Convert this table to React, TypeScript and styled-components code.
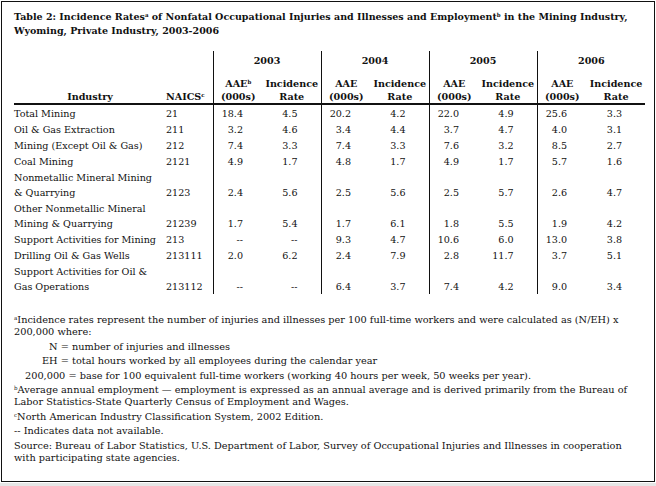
import React from "react";
import styled, { createGlobalStyle } from "styled-components";

const GlobalStyle = createGlobalStyle`
  html, body {
    margin: 0;
    padding: 0;
    background: #e6e6e6;
  }
  body {
    font-family: "DejaVu Serif", "Liberation Serif", serif;
    color: #111111;
  }
`;

const Page = styled.div`
  width: 656px;
  box-sizing: border-box;
  background: #ffffff;
  padding: 1px 1px 1px 1px;
`;

const Frame = styled.div`
  box-sizing: border-box;
  width: 654px;
  height: 481px;
  border: 1px solid #111111;
  padding: 8px 8px 0 12px;
  font-size: 9.6px;
`;

const Title = styled.h1`
  margin: 0;
  font-size: 9.5px;
  font-weight: bold;
  line-height: 14px;
  color: #111111;
`;

const Sup = styled.sup`
  font-size: 5.5px;
  vertical-align: 3px;
  line-height: 0;
`;

const Table = styled.table`
  margin-top: 13px;
  width: 631px;
  border-collapse: collapse;
  table-layout: fixed;
  font-size: 9.6px;
`;

const Th = styled.th<{ $align?: string; $sep?: boolean; $rule?: boolean }>`
  font-weight: bold;
  line-height: 13px;
  padding: ${(p) => (p.$rule ? "3px 0 0 0" : "3px 0 7px 0")};
  text-align: ${(p) => p.$align || "center"};
  vertical-align: bottom;
  white-space: nowrap;
  border-left: ${(p) => (p.$sep ? "1px solid #111111" : "none")};
  border-bottom: ${(p) => (p.$rule ? "2px solid #111111" : "none")};
`;

const NaicsTh = styled(Th)`
  padding-right: 8px;
`;

const Td = styled.td<{ $kind: "label" | "code" | "aae" | "rate"; $sep?: boolean }>`
  line-height: 15px;
  padding: 1px 0 0 0;
  vertical-align: bottom;
  white-space: ${(p) => (p.$kind === "label" ? "normal" : "nowrap")};
  text-align: ${(p) => (p.$kind === "label" || p.$kind === "code" ? "left" : "right")};
  padding-right: ${(p) =>
    p.$kind === "aae" ? "20px" : p.$kind === "rate" ? "23px" : p.$kind === "label" ? "8px" : "0"};
  border-left: ${(p) => (p.$sep ? "1px solid #111111" : "none")};
`;

const Notes = styled.div`
  margin-top: 20px;
  font-size: 9.75px;
  line-height: 12px;
`;

const Note = styled.p<{ $indent?: number }>`
  margin: 0 0 2.5px 0;
  padding-left: ${(p) => p.$indent || 0}px;
`;

type Row = { name: string; code: string; v: string[] };

const rows: Row[] = [
  { name: "Total Mining", code: "21", v: ["18.4", "4.5", "20.2", "4.2", "22.0", "4.9", "25.6", "3.3"] },
  { name: "Oil & Gas Extraction", code: "211", v: ["3.2", "4.6", "3.4", "4.4", "3.7", "4.7", "4.0", "3.1"] },
  { name: "Mining (Except Oil & Gas)", code: "212", v: ["7.4", "3.3", "7.4", "3.3", "7.6", "3.2", "8.5", "2.7"] },
  { name: "Coal Mining", code: "2121", v: ["4.9", "1.7", "4.8", "1.7", "4.9", "1.7", "5.7", "1.6"] },
  { name: "Nonmetallic Mineral Mining & Quarrying", code: "2123", v: ["2.4", "5.6", "2.5", "5.6", "2.5", "5.7", "2.6", "4.7"] },
  { name: "Other Nonmetallic Mineral Mining & Quarrying", code: "21239", v: ["1.7", "5.4", "1.7", "6.1", "1.8", "5.5", "1.9", "4.2"] },
  { name: "Support Activities for Mining", code: "213", v: ["--", "--", "9.3", "4.7", "10.6", "6.0", "13.0", "3.8"] },
  { name: "Drilling Oil & Gas Wells", code: "213111", v: ["2.0", "6.2", "2.4", "7.9", "2.8", "11.7", "3.7", "5.1"] },
  { name: "Support Activities for Oil & Gas Operations", code: "213112", v: ["--", "--", "6.4", "3.7", "7.4", "4.2", "9.0", "3.4"] },
];

const years = ["2003", "2004", "2005", "2006"];

export default function App() {
  return (
    <>
      <GlobalStyle />
      <Page>
        <Frame>
          <Title>
            Table 2: Incidence Rates<Sup>a</Sup> of Nonfatal Occupational Injuries and Illnesses and Employment
            <Sup>b</Sup> in the Mining Industry, Wyoming, Private Industry, 2003-2006
          </Title>
          <Table>
            <colgroup>
              <col style={{ width: 152 }} />
              <col style={{ width: 47 }} />
              {years.map((y) => (
                <React.Fragment key={y}>
                  <col style={{ width: 50 }} />
                  <col style={{ width: 58 }} />
                </React.Fragment>
              ))}
            </colgroup>
            <thead>
              <tr>
                <Th rowSpan={2} $rule>Industry</Th>
                <NaicsTh rowSpan={2} $rule $align="right">
                  NAICS<Sup>c</Sup>
                </NaicsTh>
                {years.map((y) => (
                  <Th key={y} colSpan={2} $sep>
                    {y}
                  </Th>
                ))}
              </tr>
              <tr>
                {years.map((y, i) => (
                  <React.Fragment key={y}>
                    <Th $sep $rule>
                      AAE{i === 0 ? <Sup>b</Sup> : null}
                      <br />
                      (000s)
                    </Th>
                    <Th $rule>
                      Incidence
                      <br />
                      Rate
                    </Th>
                  </React.Fragment>
                ))}
              </tr>
            </thead>
            <tbody>
              {rows.map((r) => (
                <tr key={r.code}>
                  <Td $kind="label">{r.name}</Td>
                  <Td $kind="code">{r.code}</Td>
                  {r.v.map((val, i) => (
                    <Td key={i} $kind={i % 2 === 0 ? "aae" : "rate"} $sep={i % 2 === 0}>
                      {val}
                    </Td>
                  ))}
                </tr>
              ))}
            </tbody>
          </Table>
          <Notes>
            <Note>
              <Sup>a</Sup>Incidence rates represent the number of injuries and illnesses per 100 full-time workers and
              were calculated as (N/EH) x 200,000 where:
            </Note>
            <Note $indent={35}>N = number of injuries and illnesses</Note>
            <Note $indent={28}>EH = total hours worked by all employees during the calendar year</Note>
            <Note $indent={11}>
              200,000 = base for 100 equivalent full-time workers (working 40 hours per week, 50 weeks per year).
            </Note>
            <Note>
              <Sup>b</Sup>Average annual employment — employment is expressed as an annual average and is derived
              primarily from the Bureau of Labor Statistics-State Quarterly Census of Employment and Wages.
            </Note>
            <Note>
              <Sup>c</Sup>North American Industry Classification System, 2002 Edition.
            </Note>
            <Note>-- Indicates data not available.</Note>
            <Note>
              Source: Bureau of Labor Statistics, U.S. Department of Labor, Survey of Occupational Injuries and
              Illnesses in cooperation with participating state agencies.
            </Note>
          </Notes>
        </Frame>
      </Page>
    </>
  );
}
